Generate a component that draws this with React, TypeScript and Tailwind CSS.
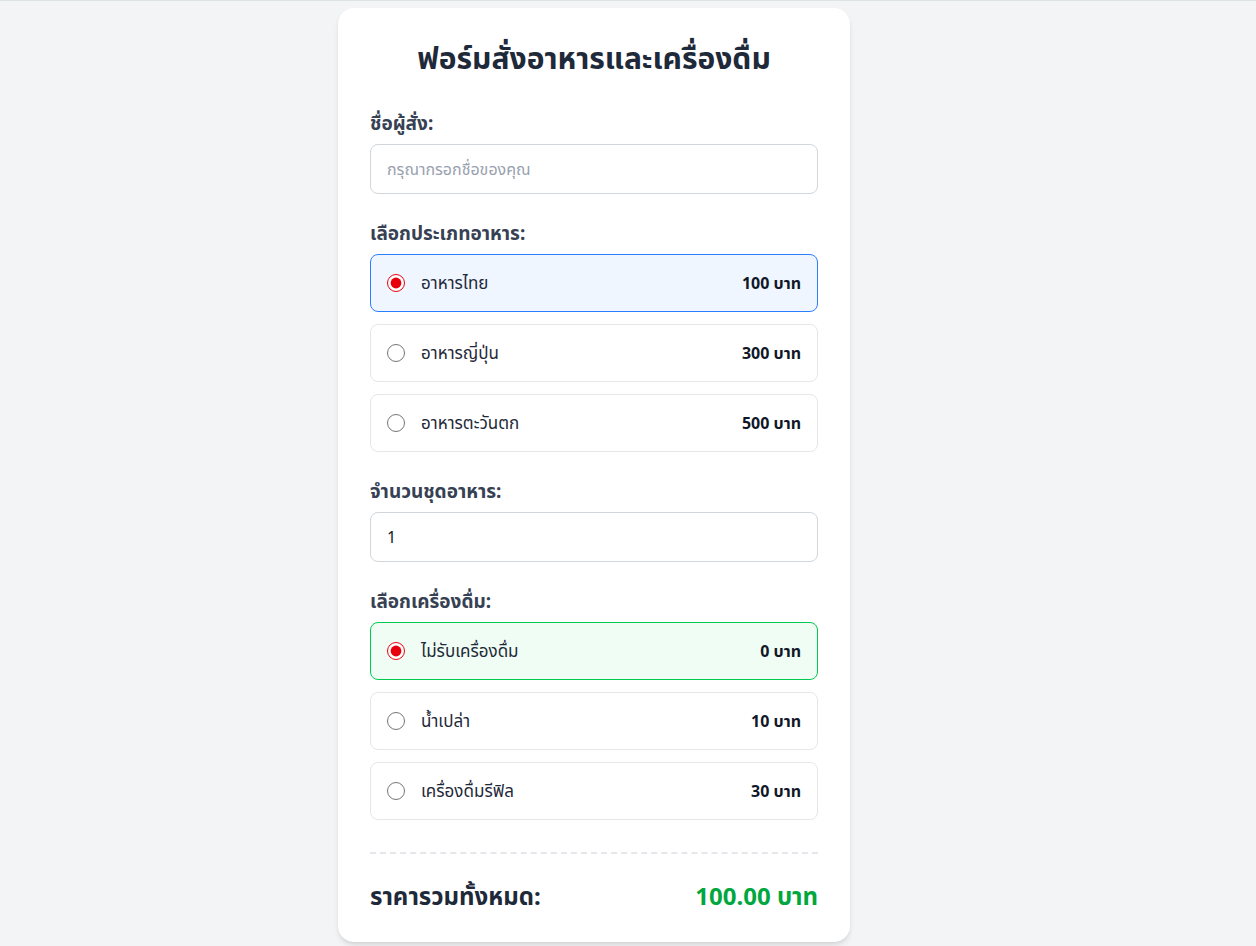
import { useState } from 'react'

const foods = [
  { id: 'thai', name: 'อาหารไทย', price: 100 },
  { id: 'japanese', name: 'อาหารญี่ปุ่น', price: 300 },
  { id: 'western', name: 'อาหารตะวันตก', price: 500 },
]

const drinks = [
  { id: 'none', name: 'ไม่รับเครื่องดื่ม', price: 0 },
  { id: 'water', name: 'น้ำเปล่า', price: 10 },
  { id: 'refill', name: 'เครื่องดื่มรีฟิล', price: 30 },
]

export default function App() {
  const [name, setName] = useState('')
  const [food, setFood] = useState('thai')
  const [qty, setQty] = useState(1)
  const [drink, setDrink] = useState('none')

  const foodPrice = foods.find(f => f.id === food)?.price || 0
  const drinkPrice = drinks.find(d => d.id === drink)?.price || 0
  const total = (foodPrice + drinkPrice) * qty

  return (
    <div
      className="min-h-screen bg-[#f3f4f6] border-t border-[#dbe3e3] pt-[7px] pb-1"
      style={{ fontFamily: '"Noto Sans", "Noto Sans Thai", sans-serif' }}
    >
      <div className="w-[512px] ml-[338px] bg-white rounded-2xl shadow-md p-8 pb-7">
        <h1 className="text-[30px] leading-9 font-bold text-center text-gray-800 mb-[34px]">
          ฟอร์มสั่งอาหารและเครื่องดื่ม
        </h1>

        {/* Name */}
        <div className="mb-[26px]">
          <label className="block text-[19px] leading-[26px] font-bold text-gray-700 mb-2">ชื่อผู้สั่ง:</label>
          <input
            type="text"
            value={name}
            onChange={e => setName(e.target.value)}
            placeholder="กรุณากรอกชื่อของคุณ"
            className="w-full h-[50px] px-4 border border-gray-300 rounded-lg text-base text-gray-800 placeholder:text-gray-400 outline-none"
          />
        </div>

        {/* Food type */}
        <div className="mb-[26px]">
          <label className="block text-[19px] leading-[26px] font-bold text-gray-700 mb-2">เลือกประเภทอาหาร:</label>
          <div className="space-y-3">
            {foods.map(f => (
              <label
                key={f.id}
                className={`flex items-center justify-between h-[58px] px-4 rounded-lg border cursor-pointer ${
                  food === f.id ? 'bg-blue-50 border-blue-500' : 'bg-white border-gray-200'
                }`}
              >
                <div className="flex items-center">
                  <input
                    type="radio"
                    name="food"
                    checked={food === f.id}
                    onChange={() => setFood(f.id)}
                    className="w-[18px] h-[18px] accent-red-600 m-0"
                  />
                  <span className="ml-4 text-[17px] text-gray-800">{f.name}</span>
                </div>
                <span className="text-base font-bold text-gray-900">{f.price} บาท</span>
              </label>
            ))}
          </div>
        </div>

        {/* Quantity */}
        <div className="mb-[26px]">
          <label className="block text-[19px] leading-[26px] font-bold text-gray-700 mb-2">จำนวนชุดอาหาร:</label>
          <input
            type="number"
            min={1}
            value={qty}
            onChange={e => setQty(Math.max(1, Number(e.target.value) || 1))}
            className="w-full h-[50px] px-4 border border-gray-300 rounded-lg text-base text-gray-900 outline-none"
          />
        </div>

        {/* Drinks */}
        <div>
          <label className="block text-[19px] leading-[26px] font-bold text-gray-700 mb-2">เลือกเครื่องดื่ม:</label>
          <div className="space-y-3">
            {drinks.map(d => (
              <label
                key={d.id}
                className={`flex items-center justify-between h-[58px] px-4 rounded-lg border cursor-pointer ${
                  drink === d.id ? 'bg-green-50 border-green-500' : 'bg-white border-gray-200'
                }`}
              >
                <div className="flex items-center">
                  <input
                    type="radio"
                    name="drink"
                    checked={drink === d.id}
                    onChange={() => setDrink(d.id)}
                    className="w-[18px] h-[18px] accent-red-600 m-0"
                  />
                  <span className="ml-4 text-[17px] text-gray-800">{d.name}</span>
                </div>
                <span className="text-base font-bold text-gray-900">{d.price} บาท</span>
              </label>
            ))}
          </div>
        </div>

        {/* Total */}
        <div className="mt-8 pt-6 border-t-2 border-dashed border-gray-200 flex items-center justify-between">
          <span className="text-2xl leading-9 font-bold text-gray-800">ราคารวมทั้งหมด:</span>
          <span className="text-2xl leading-9 font-bold text-green-600">{total.toFixed(2)} บาท</span>
        </div>
      </div>
    </div>
  )
}
